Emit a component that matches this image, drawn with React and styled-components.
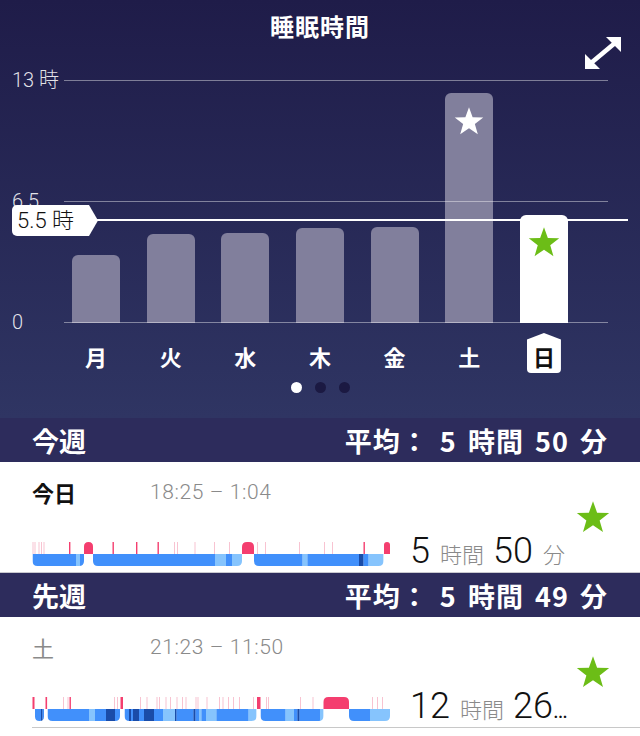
import React from 'react';
import styled, { createGlobalStyle } from 'styled-components';

const GlobalStyle = createGlobalStyle`
  html, body { margin: 0; padding: 0; background: #ffffff; }
  body { font-family: "Noto Sans CJK JP", "Noto Sans", sans-serif; }
  * { box-sizing: border-box; }
`;

const BLUE = '#4190fb';
const PALE = '#86c4fd';
const DARK = '#1a4ca8';
const PINK = '#f43e6f';
const PINK_PALE = '#f8c3d1';
const GREEN = '#6cbd17';

const Page = styled.div`
  width: 640px;
  min-height: 736px;
  background: #ffffff;
  overflow: hidden;
`;

const ChartSection = styled.section`
  position: relative;
  background: linear-gradient(180deg, #1f1c49 0%, #2f3563 100%);
  padding-bottom: 25px;
`;

const Title = styled.h1`
  margin: 0;
  height: 52px;
  line-height: 52px;
  text-align: center;
  color: #ffffff;
  font-size: 24px;
  font-weight: 700;
  letter-spacing: 1px;
`;

const ExpandButton = styled.button`
  position: absolute;
  left: 585px;
  top: 37px;
  width: 36px;
  height: 32px;
  padding: 0;
  border: 0;
  background: none;
  display: block;
`;

const Chart = styled.div`
  position: relative;
  height: 243px;
  margin-top: 28px;
`;

const GridLine = styled.div`
  position: absolute;
  left: 64px;
  right: 32px;
  top: ${(p) => p.$y}px;
  height: 1px;
  background: rgba(255, 255, 255, 0.42);
`;

const AxisLabel = styled.div`
  position: absolute;
  left: 12px;
  top: ${(p) => p.$y - 13}px;
  height: 26px;
  line-height: 26px;
  font-family: "Roboto", "Noto Sans CJK JP", sans-serif;
  font-weight: 300;
  font-size: 20px;
  color: rgba(255, 255, 255, 0.88);
  white-space: nowrap;
`;

const BarsRow = styled.div`
  position: relative;
  height: 100%;
  display: flex;
  align-items: flex-end;
  padding-left: 72px;
  gap: 26.67px;
`;

const Bar = styled.div`
  width: 48px;
  flex: none;
  border-radius: 6px 6px 0 0;
  background: ${(p) => (p.$active ? '#ffffff' : '#817f9c')};
  display: flex;
  justify-content: center;
  padding-top: ${(p) => (p.$active ? 11 : 13)}px;
`;

const AverageLine = styled.div`
  position: absolute;
  left: 95px;
  right: 12px;
  top: 139px;
  height: 2px;
  background: #ffffff;
`;

const AverageBadge = styled.div`
  position: absolute;
  left: 12px;
  top: 125px;
  width: 86px;
  height: 31px;
  padding-left: 5px;
  line-height: 31px;
  background: #ffffff;
  color: #111111;
  font-size: 22px;
  font-weight: 300;
  font-family: "Roboto", "Noto Sans CJK JP", sans-serif;
  border-radius: 5px;
  clip-path: polygon(0 0, calc(100% - 9px) 0, 100% 50%, calc(100% - 9px) 100%, 0 100%);
  white-space: nowrap;
`;

const DaysRow = styled.div`
  display: flex;
  padding-left: 72px;
  gap: 26.67px;
  margin-top: 10px;
`;

const DayCell = styled.div`
  width: 48px;
  height: 40px;
  flex: none;
  display: flex;
  justify-content: center;
`;

const DayLabel = styled.div`
  width: 34px;
  height: 40px;
  padding-top: 6px;
  line-height: 34px;
  text-align: center;
  font-size: 22px;
  font-weight: 700;
  color: ${(p) => (p.$active ? '#111111' : '#ffffff')};
  background: ${(p) => (p.$active ? '#ffffff' : 'transparent')};
  border-radius: 4px;
  clip-path: ${(p) =>
    p.$active ? 'polygon(50% 0, 100% 16%, 100% 100%, 0 100%, 0 16%)' : 'none'};
`;

const Dots = styled.div`
  display: flex;
  justify-content: center;
  gap: 13px;
  margin-top: 9px;
`;

const Dot = styled.span`
  width: 11px;
  height: 11px;
  border-radius: 50%;
  background: ${(p) => (p.$active ? '#ffffff' : '#1b1942')};
`;

const Band = styled.div`
  height: ${(p) => (p.$tall ? 45 : 44)}px;
  background: #2d2c5c;
  border-top: ${(p) => (p.$tall ? '1px solid #c9c9cf' : '0')};
  display: flex;
  align-items: center;
  justify-content: space-between;
  padding: 0 32px;
  color: #ffffff;
  font-size: 27px;
  font-weight: 700;
`;

const BandAverage = styled.span`
  letter-spacing: 1px;
  word-spacing: 4px;
`;

const Row = styled.div`
  display: flex;
  padding-left: 32px;
  background: #ffffff;
`;

const RowInner = styled.div`
  flex: 1;
  height: ${(p) => p.$h}px;
  display: flex;
  align-items: center;
  padding-right: 30px;
  border-bottom: ${(p) => (p.$divider ? '1px solid #c8c8c8' : '0')};
`;

const Info = styled.div`
  flex: 1;
  align-self: stretch;
  display: flex;
  flex-direction: column;
  padding-top: 17px;
`;

const TopLine = styled.div`
  display: flex;
  align-items: center;
  height: 26px;
`;

const DayName = styled.div`
  width: 118px;
  font-size: 22px;
  font-weight: ${(p) => (p.$today ? 700 : 400)};
  color: ${(p) => (p.$today ? '#111111' : '#8a8a8a')};
`;

const TimeRange = styled.div`
  font-family: "Roboto", "Noto Sans CJK JP", sans-serif;
  font-weight: 300;
  font-size: 21px;
  letter-spacing: 0.6px;
  color: #8a8a8a;
`;

const BottomLine = styled.div`
  display: flex;
  align-items: flex-end;
  gap: 20px;
  margin-top: 25px;
`;

const Duration = styled.div`
  width: 162px;
  white-space: nowrap;
  overflow: hidden;
  text-overflow: ellipsis;
  font-family: "Roboto", "Noto Sans CJK JP", sans-serif;
  font-size: 22px;
  color: #111111;
  line-height: 42px;
  margin-bottom: -10px;
`;

const Num = styled.span`
  font-size: 36px;
  font-weight: 300;
  color: #111111;
`;

const Unit = styled.span`
  font-family: "Noto Sans CJK JP", sans-serif;
  font-size: 22px;
  font-weight: 300;
  color: #8a8a8a;
  margin: 0 9px 0 10px;

  &:last-child {
    margin-right: 0;
  }
`;

function starPoints(cx, cy, R, r) {
  const pts = [];
  for (let i = 0; i < 10; i++) {
    const rad = i % 2 === 0 ? R : r;
    const a = (Math.PI / 5) * i - Math.PI / 2;
    pts.push(`${(cx + rad * Math.cos(a)).toFixed(2)},${(cy + rad * Math.sin(a)).toFixed(2)}`);
  }
  return pts.join(' ');
}

function Star({ size, color }) {
  return (
    <svg width={size} height={size} viewBox="0 0 40 40" style={{ display: 'block' }}>
      <polygon points={starPoints(20, 21.5, 20, 8.2)} fill={color} />
    </svg>
  );
}

function ExpandIcon() {
  return (
    <svg width="36" height="32" viewBox="0 0 36 32" style={{ display: 'block' }}>
      <polygon points="21,0 36,0 36,15" fill="#fff" />
      <polygon points="0,17 0,32 15,32" fill="#fff" />
      <line x1="6" y1="26" x2="30" y2="6" stroke="#fff" strokeWidth="4.6" />
    </svg>
  );
}

const W = 358;
const OFF = 32;
const TOP_H = 12;
const H = 25;

function SleepBar({ blocks, blobs, ticks, id }) {
  return (
    <svg width={W} height={H} viewBox={`0 0 ${W} ${H}`} style={{ display: 'block', flex: 'none' }}>
      <defs>
        {blocks.map((b, i) => {
          const x0 = b.x0 - OFF;
          const x1 = b.x1 - OFF;
          const r = Math.min(5, (x1 - x0) / 2);
          const y0 = TOP_H;
          const y1 = H - 1;
          return (
            <clipPath id={`${id}-c${i}`} key={i}>
              <path
                d={`M${x0} ${y0} H${x1} V${y1 - r} Q${x1} ${y1} ${x1 - r} ${y1} H${x0 + r} Q${x0} ${y1} ${x0} ${y1 - r} Z`}
              />
            </clipPath>
          );
        })}
      </defs>
      {ticks.map(([x, w, c], i) => (
        <rect key={`t${i}`} x={x - OFF} y={0} width={w} height={TOP_H} fill={c} />
      ))}
      {blobs.map(([a, b], i) => {
        const x0 = a - OFF;
        const x1 = b - OFF;
        const r = Math.min(5, (x1 - x0) / 2);
        return (
          <path
            key={`b${i}`}
            d={`M${x0} ${TOP_H} V${r} Q${x0} 0 ${x0 + r} 0 H${x1 - r} Q${x1} 0 ${x1} ${r} V${TOP_H} Z`}
            fill={PINK}
          />
        );
      })}
      {blocks.map((b, i) => (
        <g key={`g${i}`} clipPath={`url(#${id}-c${i})`}>
          {b.parts.map(([a, c, col], j) => (
            <rect key={j} x={a - OFF} y={TOP_H} width={c - a + 0.2} height={H - TOP_H} fill={col} />
          ))}
        </g>
      ))}
    </svg>
  );
}

const tick = (x, bright, w) => [x, w || (bright ? 1.4 : 1), bright ? PINK : PINK_PALE];

const todayData = {
  blocks: [
    { x0: 32.5, x1: 84, parts: [[32.5, 76, BLUE], [76, 80, PALE], [80, 84, BLUE]] },
    { x0: 93, x1: 242, parts: [[93, 215, BLUE], [215, 226, PALE], [226, 232, BLUE], [232, 242, PALE]] },
    {
      x0: 254,
      x1: 383.5,
      parts: [[254, 302.5, BLUE], [302.5, 307.5, PALE], [307.5, 359, BLUE], [359, 363.5, DARK], [363.5, 368.5, BLUE], [368.5, 383.5, PALE]],
    },
  ],
  blobs: [[84, 93], [242, 254], [384, 390]],
  ticks: [
    tick(32.5), tick(34.5), tick(38.5), tick(41), tick(43.5),
    tick(69, true), tick(112.5, true), tick(136, true), tick(157.5, true),
    tick(174), tick(177), tick(194.5), tick(214), tick(229), tick(257), tick(265),
    tick(299), tick(324), tick(332), tick(363.5, true),
  ],
};

const lastData = {
  blocks: [
    { x0: 35, x1: 44, parts: [[35, 41, BLUE], [41, 42.5, DARK], [42.5, 44, BLUE]] },
    { x0: 47.5, x1: 120, parts: [[47.5, 89, BLUE], [89, 95, PALE], [95, 106, BLUE], [106, 115, DARK], [115, 120, BLUE]] },
    {
      x0: 124.5,
      x1: 256.5,
      parts: [
        [124.5, 129, BLUE], [129, 131, DARK], [131, 133, BLUE], [133, 139, DARK], [139, 144, BLUE],
        [144, 154, DARK], [154, 163, BLUE], [163, 175, PALE], [175, 176.5, DARK], [176.5, 193.5, BLUE],
        [193.5, 195.5, DARK], [195.5, 199, BLUE], [199, 201.5, PALE], [201.5, 206, BLUE], [206, 216.5, PALE],
        [216.5, 248.5, BLUE], [248.5, 256.5, PALE],
      ],
    },
    {
      x0: 260.5,
      x1: 323.5,
      parts: [[260.5, 285.5, BLUE], [285.5, 294, PALE], [294, 297.5, BLUE], [297.5, 299.5, DARK], [299.5, 320, BLUE], [320, 323.5, PALE]],
    },
    { x0: 349, x1: 390, parts: [[349, 370, BLUE], [370, 390, PALE]] },
  ],
  blobs: [[323.5, 349]],
  ticks: [
    tick(32.5, true, 2), tick(45.5, true, 1.6), tick(63), tick(67.5), tick(69.5, true),
    tick(114), tick(117), tick(120.5, true, 2.5), tick(140), tick(146.5), tick(156.5), tick(159),
    tick(165.5), tick(170), tick(176.5), tick(182), tick(185.5), tick(195.5), tick(197.5),
    tick(206.5), tick(219), tick(222.5), tick(228), tick(233), tick(239), tick(253),
    tick(257, true, 3.5), tick(266), tick(268), tick(300), tick(312.5), tick(372), tick(377), tick(382),
  ],
};

const days = [
  { label: '月', h: 68 },
  { label: '火', h: 89 },
  { label: '水', h: 90 },
  { label: '木', h: 95 },
  { label: '金', h: 96 },
  { label: '土', h: 230, star: 'white' },
  { label: '日', h: 108, star: 'green', active: true },
];

function SleepRow({ today, day, range, data, id, hours, minutes, h, divider }) {
  return (
    <Row>
      <RowInner $h={h} $divider={divider}>
        <Info>
          <TopLine>
            <DayName $today={today}>{day}</DayName>
            <TimeRange>{range}</TimeRange>
          </TopLine>
          <BottomLine>
            <SleepBar id={id} {...data} />
            <Duration>
              <Num>{hours}</Num>
              <Unit>時間</Unit>
              <Num>{minutes}</Num>
              <Unit>分</Unit>
            </Duration>
          </BottomLine>
        </Info>
        <Star size={34} color={GREEN} />
      </RowInner>
    </Row>
  );
}

export default function App() {
  return (
    <Page>
      <GlobalStyle />
      <ChartSection>
        <Title>睡眠時間</Title>
        <ExpandButton aria-label="expand">
          <ExpandIcon />
        </ExpandButton>
        <Chart>
          <BarsRow>
            {days.map((d) => (
              <Bar key={d.label} $active={d.active} style={{ height: d.h }}>
                {d.star && <Star size={d.star === 'green' ? 32 : 30} color={d.star === 'green' ? GREEN : '#ffffff'} />}
              </Bar>
            ))}
          </BarsRow>
          <GridLine $y={0} />
          <GridLine $y={121} />
          <GridLine $y={242} />
          <AxisLabel $y={0}>13 時</AxisLabel>
          <AxisLabel $y={121}>6.5</AxisLabel>
          <AxisLabel $y={242}>0</AxisLabel>
          <AverageLine />
          <AverageBadge>5.5 時</AverageBadge>
        </Chart>
        <DaysRow>
          {days.map((d) => (
            <DayCell key={d.label}>
              <DayLabel $active={d.active}>{d.label}</DayLabel>
            </DayCell>
          ))}
        </DaysRow>
        <Dots>
          <Dot $active />
          <Dot />
          <Dot />
        </Dots>
      </ChartSection>

      <Band>
        <span>今週</span>
        <BandAverage>平均： 5 時間 50 分</BandAverage>
      </Band>
      <SleepRow today day="今日" range="18:25 – 1:04" data={todayData} id="today" hours="5" minutes="50" h={110} />
      <Band $tall>
        <span>先週</span>
        <BandAverage>平均： 5 時間 49 分</BandAverage>
      </Band>
      <SleepRow day="土" range="21:23 – 11:50" data={lastData} id="sat" hours="12" minutes="26" h={111} divider />
    </Page>
  );
}
